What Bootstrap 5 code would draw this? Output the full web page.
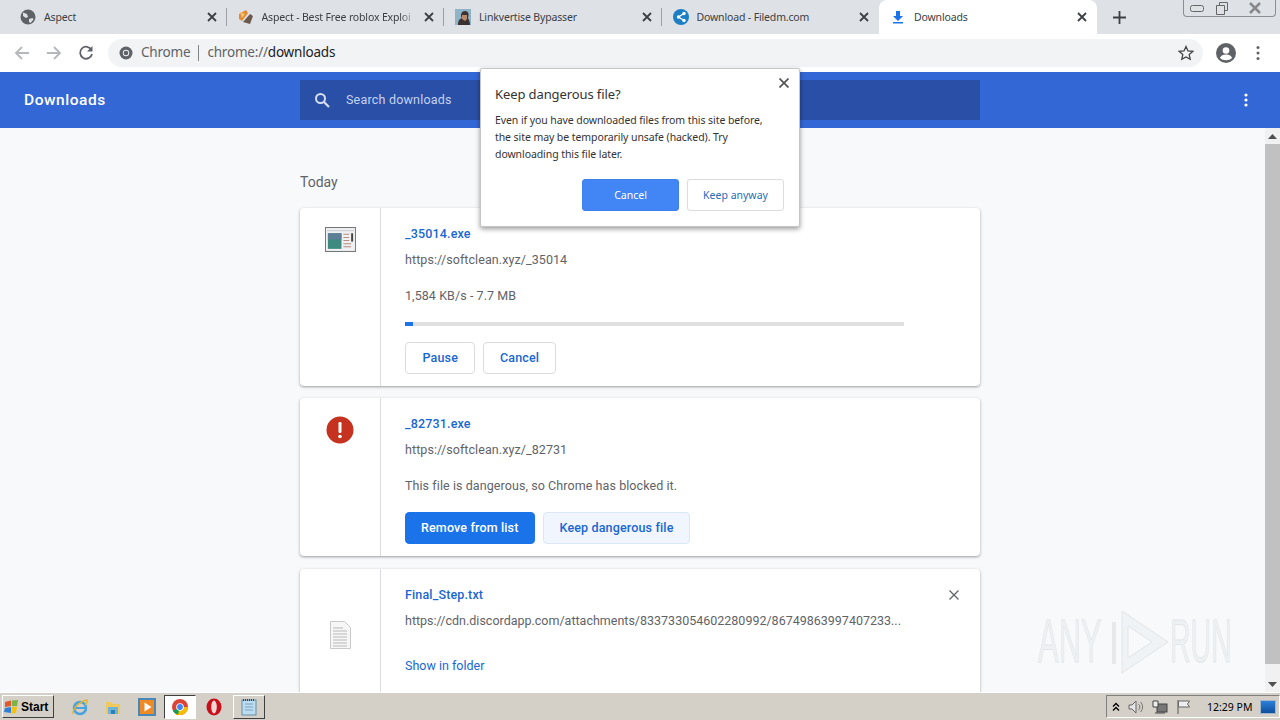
<!DOCTYPE html>
<html lang="en">
<head>
    <meta charset="UTF-8">
    <title>Downloads</title>
    <link href="https://cdn.jsdelivr.net/npm/bootstrap@5.3.3/dist/css/bootstrap.min.css" rel="stylesheet">
    <style>
        html, body { height: 100%; overflow: hidden; }
        body { width: 1280px; height: 720px; background: #f8f9fa; color: #5f6368; font-family: Roboto, sans-serif; font-size: 13px; position: relative; }
        svg { display: block; flex: none; }

        /* browser chrome */
        .tab-strip { height: 34px; background: #dee1e6; padding-left: 9px; font: 10.5px "Noto Sans", sans-serif; letter-spacing: -.15px; color: #3c4043; }
        .tab-item { width: 217.5px; height: 34px; padding: 0 10px 0 11px; position: relative; }
        .tab-item.sep::after { content: ""; position: absolute; right: 0; top: 8px; height: 18px; border-right: 1px solid #9aa0a6; }
        .tab-item.active { width: 218px; background: #fff; border-radius: 8px 8px 0 0; }
        .tab-title { flex: 1; white-space: nowrap; overflow: hidden; margin-left: 8px; }
        .tab-title.faded { margin-right: 6px; -webkit-mask-image: linear-gradient(90deg, #000 88%, transparent); mask-image: linear-gradient(90deg, #000 88%, transparent); }
        .tab-new { width: 44px; }
        .win-btns { width: 93px; height: 17px; margin-left: 42px; border: 1px solid #8a8f94; border-top: 0; border-radius: 0 0 4px 4px; }
        .win-btns > div { flex: 1; }
        .win-btns > div:last-child { flex: 1.6; }
        .tool-bar { height: 38px; background: #fff; padding-left: 14px; }
        .tool-btn { width: 32px; }
        .omni-box { width: 1095px; height: 28px; margin-left: -2px; background: #f1f3f4; border-radius: 14px; padding: 0 9px 0 11px; font: 13.5px "Noto Sans", sans-serif; color: #5f6368; letter-spacing: -.2px; }
        .omni-box span { margin-top: -2px; }
        .omni-sep { height: 16px; border-left: 1px solid #80868b; margin: 0 8px; }
        .omni-url b { font-weight: 400; color: #202124; }
        .tool-avatar { margin-left: 13px; margin-right: 20px; }

        .dl-header { height: 56px; background: #3367d6; color: #fff; }
        .dl-title { width: 300px; padding-left: 24px; padding-top: 2px; font-size: 15.5px; font-weight: 500; letter-spacing: .55px; }
        .dl-search { width: 680px; height: 40px; background: #2a4fa6; padding-left: 14px; color: #c5d2f0; font-size: 12.5px; letter-spacing: .2px; }
        .dl-search span { margin-left: 16px; }
        .dl-menu { margin-left: 264px; }

        /* download list */
        .dl-body { height: 564px; }
        .dl-scroll { flex: 1; padding-left: 300px; overflow: hidden; }
        .dl-today { height: 80px; padding-top: 43px; font-size: 14px; color: #5f6368; line-height: 22px; }
        .dl-card { width: 680px; margin-bottom: 12px; border: 0; border-radius: 4px; background: #fff; box-shadow: 0 1px 2px rgba(60,64,67,.35), 0 1px 3px 1px rgba(60,64,67,.12); flex-direction: row; }
        .dl-card.mt-extra { margin-bottom: 0; margin-top: 13px; height: 140px; }
        .dl-icon { width: 81px; border-right: 1px solid #dadce0; padding-top: 18px; }
        .dl-icon.first { padding-top: 19px; }
        .dl-icon.mid { padding-top: 52px; }
        .dl-info { flex: 1; padding: 16px 24px 12px 24px; position: relative; line-height: 20px; }
        .dl-name { color: #1967d2; font-weight: 500; font-size: 12.5px; letter-spacing: .15px; text-decoration: none; display: block; }
        .dl-line { margin-top: 6px; font-size: 12.5px; letter-spacing: .08px; }
        .dl-line.gap { margin-top: 16px; }
        .dl-line.wide { width: 498px; white-space: nowrap; letter-spacing: 0; }
        .dl-link { display: block; margin-top: 25px; color: #1967d2; font-size: 12.5px; text-decoration: none; }
        .dl-bar { width: 499px; height: 4px; margin-top: 16px; background: #e0e0e0; border-radius: 0; }
        .dl-bar .progress-bar { background: #1a73e8; }
        .dl-actions { margin-top: 16px; gap: 8px; }
        .dl-btn { height: 32px; padding: 0 15px; font-size: 12.5px; font-weight: 500; letter-spacing: .15px; line-height: 30px; border: 1px solid #dadce0; color: #1967d2; background: #fff; border-radius: 4px; }
        .dl-btn.plain { padding: 0 16.5px; }
        .dl-btn.plain + .dl-btn.plain { padding: 0 15.5px; }
        .dl-btn.solid { background: #1a73e8; border-color: #1a73e8; color: #fff; }
        .dl-btn.soft { padding: 0 16px; background: #f1f6fe; border-color: #dbe6f6; }
        .dl-close { position: absolute; right: 21px; top: 21px; }

        .scroll-bar { width: 15px; background: #f1f1f1; }
        .scroll-arrow { height: 16px; }
        .scroll-thumb { height: 520px; background: #c1c1c1; }

        /* confirm dialog */
        .keep-dialog { position: absolute; left: 480px; top: 68px; width: 320px; height: 159px; background: #fff; border: 1px solid #c6c6c6; border-radius: 2px; box-shadow: 0 2px 5px rgba(0,0,0,.4); padding: 15px 15px 0 14px; font-family: "Noto Sans", sans-serif; color: #202124; }
        .keep-title { font-size: 13px; letter-spacing: -.1px; line-height: 20px; color: #333; margin: 0 0 8px; font-weight: 400; }
        .keep-text { font-size: 10.5px; letter-spacing: -.08px; line-height: 17px; margin: 0; color: #333; }
        .keep-close { position: absolute; right: 10px; top: 9px; }
        .keep-actions { margin-top: 16px; gap: 8px; }
        .keep-btn { width: 97px; height: 32px; padding: 0; font-size: 10.5px; line-height: 30px; border: 1px solid #dadce0; border-radius: 3px; color: #2a6cb8; background: #fff; }
        .keep-btn.solid { background: #4285f4; border-color: #3f80e8; color: #fff; }

        /* watermark */
        .any-mark { position: absolute; left: 1038px; top: 608px; width: 242px; height: 66px; }
        .any-mark svg { position: absolute; left: 70px; top: 0; }
        .any-word { position: absolute; top: 0; font: 400 62px/66px "Liberation Sans", sans-serif; color: #eef1f3; -webkit-text-stroke: 1px #e2e5e8; transform-origin: left top; white-space: nowrap; }
        .any-word.left { left: 0; transform: scaleX(.5); }
        .any-word.right { left: 132px; transform: scaleX(.46); }

        /* taskbar */
        .task-bar { height: 28px; background: #d4d0c8; border-top: 1px solid #fff; padding-left: 2px; position: relative; }
        .start-btn { width: 52px; height: 23px; background: #d4d0c8; border: 1px solid; border-color: #fff #404040 #404040 #fff; font: 700 12px "Liberation Sans", sans-serif; color: #000; gap: 1px; padding-left: 1px; }
        .task-icons { margin-left: 9px; }
        .task-slot { width: 33.5px; }
        .task-slot.on { width: 32px; height: 24px; background: #fff; border: 1px solid; border-color: #404040 #fff #fff #404040; }
        .task-slot.opera { margin-left: 2px; }
        .task-slot.raised { width: 32px; height: 24px; margin-left: 1.5px; border: 1px solid; border-color: #fff #404040 #404040 #fff; }
        .sys-tray { margin-left: auto; width: 174px; height: 23px; border: 1px solid; border-color: #808080 #fff #fff #808080; font: 10.5px "Noto Sans", sans-serif; color: #000; padding-left: 5px; }
        .tray-clock { margin-left: 16px; width: 48px; white-space: nowrap; }
        .tray-show { margin-left: 5px; width: 16px; height: 14px; background: linear-gradient(#2c7fd8, #0f4f9e); border: 1px solid #9fb8d0; }
    </style>
</head>
<body>
    <div class="tab-strip d-flex align-items-start">
        <div class="tab-item sep d-flex align-items-center">
            <svg width="16" height="16" viewBox="0 0 16 16"><circle cx="8" cy="8" r="7.5" fill="#5f6368"/><path d="M3 3.5l4 1.500 1 3-2 1-3-2zM9 10l3.500-1 1 1.500-3 3.500-1.500-1z" fill="#dee1e6"/></svg>
            <div class="tab-title">Aspect</div>
            <svg width="10" height="10" viewBox="0 0 10 10"><path d="M1 1l8 8M9 1l-8 8" stroke="#3c4043" stroke-width="1.8"/></svg>
        </div>
        <div class="tab-item sep d-flex align-items-center">
            <svg width="16" height="16" viewBox="0 0 16 16"><path d="M1 5l7-4 2 3-6 8-3-2z" fill="#e58a2e"/><path d="M5 13l7-8 3 2-3 8z" fill="#6b5a4c"/><path d="M2 3l5 2-3 4z" fill="#f4c27a"/></svg>
            <div class="tab-title faded">Aspect - Best Free roblox Exploi</div>
            <svg width="10" height="10" viewBox="0 0 10 10"><path d="M1 1l8 8M9 1l-8 8" stroke="#3c4043" stroke-width="1.8"/></svg>
        </div>
        <div class="tab-item sep d-flex align-items-center">
            <svg width="16" height="16" viewBox="0 0 16 16"><rect width="16" height="16" fill="#8fb4c8"/><path d="M3 16c0-5 2-6 4-7-2-2-1-7 3-7s4 4 3 7c1 2 2 4 2 7z" fill="#3a3330"/><path d="M7 6h5v4l-2 2-3-2z" fill="#b98a6a"/></svg>
            <div class="tab-title">Linkvertise Bypasser</div>
            <svg width="10" height="10" viewBox="0 0 10 10"><path d="M1 1l8 8M9 1l-8 8" stroke="#3c4043" stroke-width="1.8"/></svg>
        </div>
        <div class="tab-item d-flex align-items-center">
            <svg width="16" height="16" viewBox="0 0 16 16"><circle cx="8" cy="8" r="8" fill="#1b7fc4"/><path d="M11 4.5L5.500 8l5.500 3.500" fill="none" stroke="#fff" stroke-width="1.300"/><circle cx="11" cy="4.500" r="1.700" fill="#fff"/><circle cx="5.500" cy="8" r="1.700" fill="#fff"/><circle cx="11" cy="11.500" r="1.700" fill="#fff"/></svg>
            <div class="tab-title">Download - Filedm.com</div>
            <svg width="10" height="10" viewBox="0 0 10 10"><path d="M1 1l8 8M9 1l-8 8" stroke="#3c4043" stroke-width="1.8"/></svg>
        </div>
        <div class="tab-item active d-flex align-items-center">
            <svg width="16" height="16" viewBox="0 0 16 16"><path d="M6 2h4v5h3l-5 5-5-5h3z" fill="#1a73e8"/><rect x="3" y="13" width="10" height="1.500" fill="#1a73e8"/></svg>
            <div class="tab-title">Downloads</div>
            <svg width="10" height="10" viewBox="0 0 10 10"><path d="M1 1l8 8M9 1l-8 8" stroke="#3c4043" stroke-width="1.8"/></svg>
        </div>
        <div class="tab-new d-flex align-items-center justify-content-center align-self-stretch">
            <svg width="13" height="13" viewBox="0 0 13 13"><path d="M6.500 0v13M0 6.500h13" stroke="#3c4043" stroke-width="1.800"/></svg>
        </div>
        <div class="win-btns d-flex align-items-center">
            <div class="d-flex justify-content-center"><svg width="14" height="7" viewBox="0 0 14 7"><rect x=".5" y=".5" width="13" height="6" rx="2" fill="none" stroke="#666"/></svg></div>
            <div class="d-flex justify-content-center"><svg width="14" height="14" viewBox="0 0 14 14"><path d="M1.500 4.500h8v9h-8zM4.500 4V1.500h8v8H10" fill="none" stroke="#666"/></svg></div>
            <div class="d-flex justify-content-center"><svg width="14" height="12" viewBox="0 0 14 12"><path d="M2 1l10 10M12 1L2 11" stroke="#888" stroke-width="2.500"/></svg></div>
        </div>
    </div>

    <div class="tool-bar d-flex align-items-center">
        <div class="tool-btn"><svg width="16" height="16" viewBox="0 0 16 16"><path d="M15 8H2M8 2L2 8l6 6" fill="none" stroke="#b4b7bb" stroke-width="1.800"/></svg></div>
        <div class="tool-btn"><svg width="16" height="16" viewBox="0 0 16 16"><path d="M1 8h13M8 2l6 6-6 6" fill="none" stroke="#b4b7bb" stroke-width="1.800"/></svg></div>
        <div class="tool-btn"><svg width="16" height="16" viewBox="0 0 16 16"><path d="M13.500 5A6 6 0 1 0 14 9" fill="none" stroke="#5f6368" stroke-width="1.800"/><path d="M14.500 1v5.500H9z" fill="#5f6368"/></svg></div>
        <div class="omni-box d-flex align-items-center">
            <svg width="14" height="14" viewBox="0 0 14 14"><circle cx="7" cy="7" r="6.500" fill="#5f6368"/><circle cx="7" cy="7" r="3.200" fill="#f1f3f4"/><circle cx="7" cy="7" r="2.300" fill="#5f6368"/></svg>
            <span class="ms-2">Chrome</span>
            <div class="omni-sep"></div>
            <span class="omni-url">chrome://<b>downloads</b></span>
            <svg class="ms-auto" width="16" height="16" viewBox="0 0 16 16"><path d="M8 1.500l2 4.400 4.800.5-3.600 3.200 1 4.700L8 11.900l-4.200 2.400 1-4.700L1.200 6.400 6 5.900z" fill="none" stroke="#444" stroke-width="1.300"/></svg>
        </div>
        <svg class="tool-avatar" width="20" height="20" viewBox="0 0 20 20"><circle cx="10" cy="10" r="10" fill="#5f6368"/><circle cx="10" cy="7.500" r="3.300" fill="#fff"/><path d="M4 15c1-3 4-3.500 6-3.500s5 .5 6 3.500c-3 3-9 3-12 0z" fill="#fff"/></svg>
        <svg width="4" height="16" viewBox="0 0 4 16"><circle cx="2" cy="2.500" r="1.500" fill="#5f6368"/><circle cx="2" cy="8" r="1.500" fill="#5f6368"/><circle cx="2" cy="13.500" r="1.500" fill="#5f6368"/></svg>
    </div>

    <div class="dl-header d-flex align-items-center">
        <div class="dl-title">Downloads</div>
        <div class="dl-search d-flex align-items-center">
            <svg width="16" height="16" viewBox="0 0 16 16"><circle cx="6.500" cy="6.500" r="4.500" fill="none" stroke="#d5def5" stroke-width="2"/><path d="M10 10l5 5" stroke="#d5def5" stroke-width="2.200"/></svg>
            <span>Search downloads</span>
        </div>
        <svg class="dl-menu" width="4" height="14" viewBox="0 0 4 14"><circle cx="2" cy="2" r="1.600" fill="#fff"/><circle cx="2" cy="7" r="1.600" fill="#fff"/><circle cx="2" cy="12" r="1.600" fill="#fff"/></svg>
    </div>

    <div class="dl-body d-flex">
        <div class="dl-scroll">
            <div class="dl-today">Today</div>

            <div class="card dl-card">
                <div class="dl-icon first d-flex justify-content-center align-items-start">
                    <svg width="31" height="25" viewBox="0 0 32 24" preserveAspectRatio="none"><rect x=".5" y=".5" width="31" height="23" fill="#eef0f2" stroke="#777"/><rect x="2" y="3" width="28" height="1" fill="#c8cbce"/><rect x="3" y="6" width="14" height="15" fill="#3f8a80"/><rect x="3" y="6" width="14" height="6" fill="#5d7f95"/><path d="M19 7h6M19 10h6M19 13h6M19 16h8M19 19h8" stroke="#b98d80"/><rect x="27" y="6" width="2" height="8" fill="#444"/></svg>
                </div>
                <div class="dl-info">
                    <a class="dl-name" href="#">_35014.exe</a>
                    <div class="dl-line">https://softclean.xyz/_35014</div>
                    <div class="dl-line gap">1,584 KB/s - 7.7 MB</div>
                    <div class="progress dl-bar"><div class="progress-bar" style="width: 1.6%"></div></div>
                    <div class="dl-actions d-flex">
                        <button class="btn dl-btn plain" type="button">Pause</button>
                        <button class="btn dl-btn plain" type="button">Cancel</button>
                    </div>
                </div>
            </div>

            <div class="card dl-card">
                <div class="dl-icon d-flex justify-content-center align-items-start">
                    <svg width="28" height="28" viewBox="0 0 28 28"><circle cx="14" cy="14" r="13.500" fill="#c5321f"/><rect x="12.500" y="6" width="3" height="11" rx="1.200" fill="#fff"/><circle cx="14" cy="20.500" r="1.800" fill="#fff"/></svg>
                </div>
                <div class="dl-info">
                    <a class="dl-name" href="#">_82731.exe</a>
                    <div class="dl-line">https://softclean.xyz/_82731</div>
                    <div class="dl-line gap">This file is dangerous, so Chrome has blocked it.</div>
                    <div class="dl-actions d-flex">
                        <button class="btn dl-btn solid" type="button">Remove from list</button>
                        <button class="btn dl-btn soft" type="button">Keep dangerous file</button>
                    </div>
                </div>
            </div>

            <div class="card dl-card mt-extra">
                <div class="dl-icon mid d-flex justify-content-center align-items-start">
                    <svg width="24" height="28" viewBox="0 0 24 28"><path d="M2.500.5h14l6 6v21h-20z" fill="#f6f6f6" stroke="#c9c9c9"/><path d="M5 7h10M5 10h14M5 13h14M5 16h14M5 19h14M5 22h14M5 25h14" stroke="#b9b9b9"/></svg>
                </div>
                <div class="dl-info">
                    <a class="dl-name" href="#">Final_Step.txt</a>
                    <div class="dl-line wide">https://cdn.discordapp.com/attachments/833733054602280992/86749863997407233...</div>
                    <a class="dl-link" href="#">Show in folder</a>
                    <svg class="dl-close" width="10" height="10" viewBox="0 0 10 10"><path d="M.5.5l9 9M9.500.5l-9 9" stroke="#5f6368" stroke-width="1.300"/></svg>
                </div>
            </div>
        </div>
        <div class="scroll-bar d-flex flex-column">
            <div class="scroll-arrow d-flex align-items-center justify-content-center"><svg width="9" height="5" viewBox="0 0 9 5"><path d="M4.500 0L9 5H0z" fill="#505050"/></svg></div>
            <div class="scroll-thumb"></div>
            <div class="scroll-arrow mt-auto d-flex align-items-center justify-content-center"><svg width="9" height="5" viewBox="0 0 9 5"><path d="M4.500 5L9 0H0z" fill="#505050"/></svg></div>
        </div>
    </div>

    <div class="task-bar d-flex align-items-center">
        <div class="start-btn d-flex align-items-center">
            <svg width="16" height="16" viewBox="0 0 16 16"><path d="M1 3l6-1.500V7L1 8z" fill="#e2572b"/><path d="M8 1.500L14 1l-1 6-5 .3z" fill="#7cb342"/><path d="M1 9l6-1v6l-7-1z" fill="#2f7ed8"/><path d="M8 8l5-.3-1 6.300-4 .5z" fill="#f4c20d"/></svg>
            Start
        </div>
        <div class="task-icons d-flex align-items-center">
            <div class="task-slot d-flex justify-content-center"><svg width="18" height="18" viewBox="0 0 18 18"><circle cx="9" cy="10" r="6" fill="none" stroke="#4aa3df" stroke-width="2.500"/><path d="M4 10h10" stroke="#4aa3df" stroke-width="2"/><path d="M2 16C1 11 9 3 16 2c1 2-1 4-2 5" fill="none" stroke="#e6b422" stroke-width="1.300"/></svg></div>
            <div class="task-slot d-flex justify-content-center"><svg width="18" height="18" viewBox="0 0 18 18"><path d="M2 4h5l2 2h7v10H2z" fill="#efc95e"/><path d="M4 9h10v7H4z" fill="#6fb3d8"/><rect x="7" y="12" width="4" height="4" fill="#2f7fb5"/></svg></div>
            <div class="task-slot d-flex justify-content-center"><svg width="18" height="18" viewBox="0 0 18 18"><rect x="1" y="1" width="16" height="16" fill="#f08a24" stroke="#4a86b8" stroke-width="2"/><path d="M6.500 4.500l7 4.500-7 4.500z" fill="#fff"/></svg></div>
            <div class="task-slot on d-flex align-items-center justify-content-center"><svg width="16" height="16" viewBox="0 0 16 16"><circle cx="8" cy="8" r="8" fill="#db4437"/><path d="M8 8l-4.500 7.500A8 8 0 0 0 8 16a8 8 0 0 0 8-8H8z" fill="#fbbc05"/><path d="M8 8L1 12a8 8 0 0 0 5 3.800z" fill="#0f9d58"/><circle cx="8" cy="8" r="3.800" fill="#fff"/><circle cx="8" cy="8" r="2.900" fill="#4285f4"/></svg></div>
            <div class="task-slot opera d-flex justify-content-center"><svg width="16" height="18" viewBox="0 0 16 18"><ellipse cx="8" cy="9" rx="7.500" ry="8.500" fill="#c8101a"/><ellipse cx="8" cy="9" rx="2.800" ry="6.500" fill="#f6d5d5"/></svg></div>
            <div class="task-slot raised d-flex align-items-center justify-content-center"><svg width="18" height="18" viewBox="0 0 18 18"><rect x="2" y="2" width="14" height="15" fill="#bcdcf0" stroke="#6a8ea8"/><path d="M3 2h12" stroke="#444" stroke-width="2" stroke-dasharray="1 1"/><path d="M5 6h8M5 9h8M5 12h8" stroke="#7ba4bf"/></svg></div>
        </div>
        <div class="sys-tray d-flex align-items-center">
            <svg width="8" height="10" viewBox="0 0 8 10"><path d="M1 4.500L4 1.500l3 3M1 8.500l3-3 3 3" fill="none" stroke="#000" stroke-width="1.400"/></svg>
            <svg class="ms-2" width="16" height="16" viewBox="0 0 16 16"><path d="M1 6h3l4-4v12l-4-4H1z" fill="#e4e4e4" stroke="#666"/><path d="M10.500 5a4 4 0 0 1 0 6M12.500 3a7 7 0 0 1 0 10" fill="none" stroke="#777"/></svg>
            <svg class="ms-2" width="16" height="16" viewBox="0 0 16 16"><rect x="5" y="5" width="10" height="8" fill="#777" stroke="#444"/><path d="M1 2h5v6H1z" fill="#eee" stroke="#444"/><path d="M3 14h10" stroke="#444"/></svg>
            <svg class="ms-2" width="15" height="16" viewBox="0 0 15 16"><path d="M2 1v14" stroke="#555"/><path d="M2.500 2h11l-2 3 2 3h-11z" fill="#eee" stroke="#666"/></svg>
            <div class="tray-clock">12:29 PM</div>
            <div class="tray-show"></div>
        </div>
    </div>

    <div class="any-mark">
        <span class="any-word left">ANY</span>
        <svg width="62" height="66" viewBox="0 0 62 66">
            <path d="M14 3l46 31-46 31z M20 18v32l24-16z" fill="#f0f3f5" fill-rule="evenodd" stroke="#e2e5e8"/>
            <path d="M6 14v42" stroke="#e6e9ec" stroke-width="4"/>
        </svg>
        <span class="any-word right">RUN</span>
    </div>

    <div class="keep-dialog">
        <svg class="keep-close" width="10" height="10" viewBox="0 0 10 10"><path d="M.5.5l9 9M9.500.5l-9 9" stroke="#555" stroke-width="1.700"/></svg>
        <h2 class="keep-title">Keep dangerous file?</h2>
        <p class="keep-text">Even if you have downloaded files from this site before,<br>the site may be temporarily unsafe (hacked). Try<br>downloading this file later.</p>
        <div class="keep-actions d-flex justify-content-end">
            <button class="btn keep-btn solid" type="button">Cancel</button>
            <button class="btn keep-btn" type="button">Keep anyway</button>
        </div>
    </div>

    <script src="https://cdn.jsdelivr.net/npm/bootstrap@5.3.3/dist/js/bootstrap.bundle.min.js"></script>
</body>
</html>
